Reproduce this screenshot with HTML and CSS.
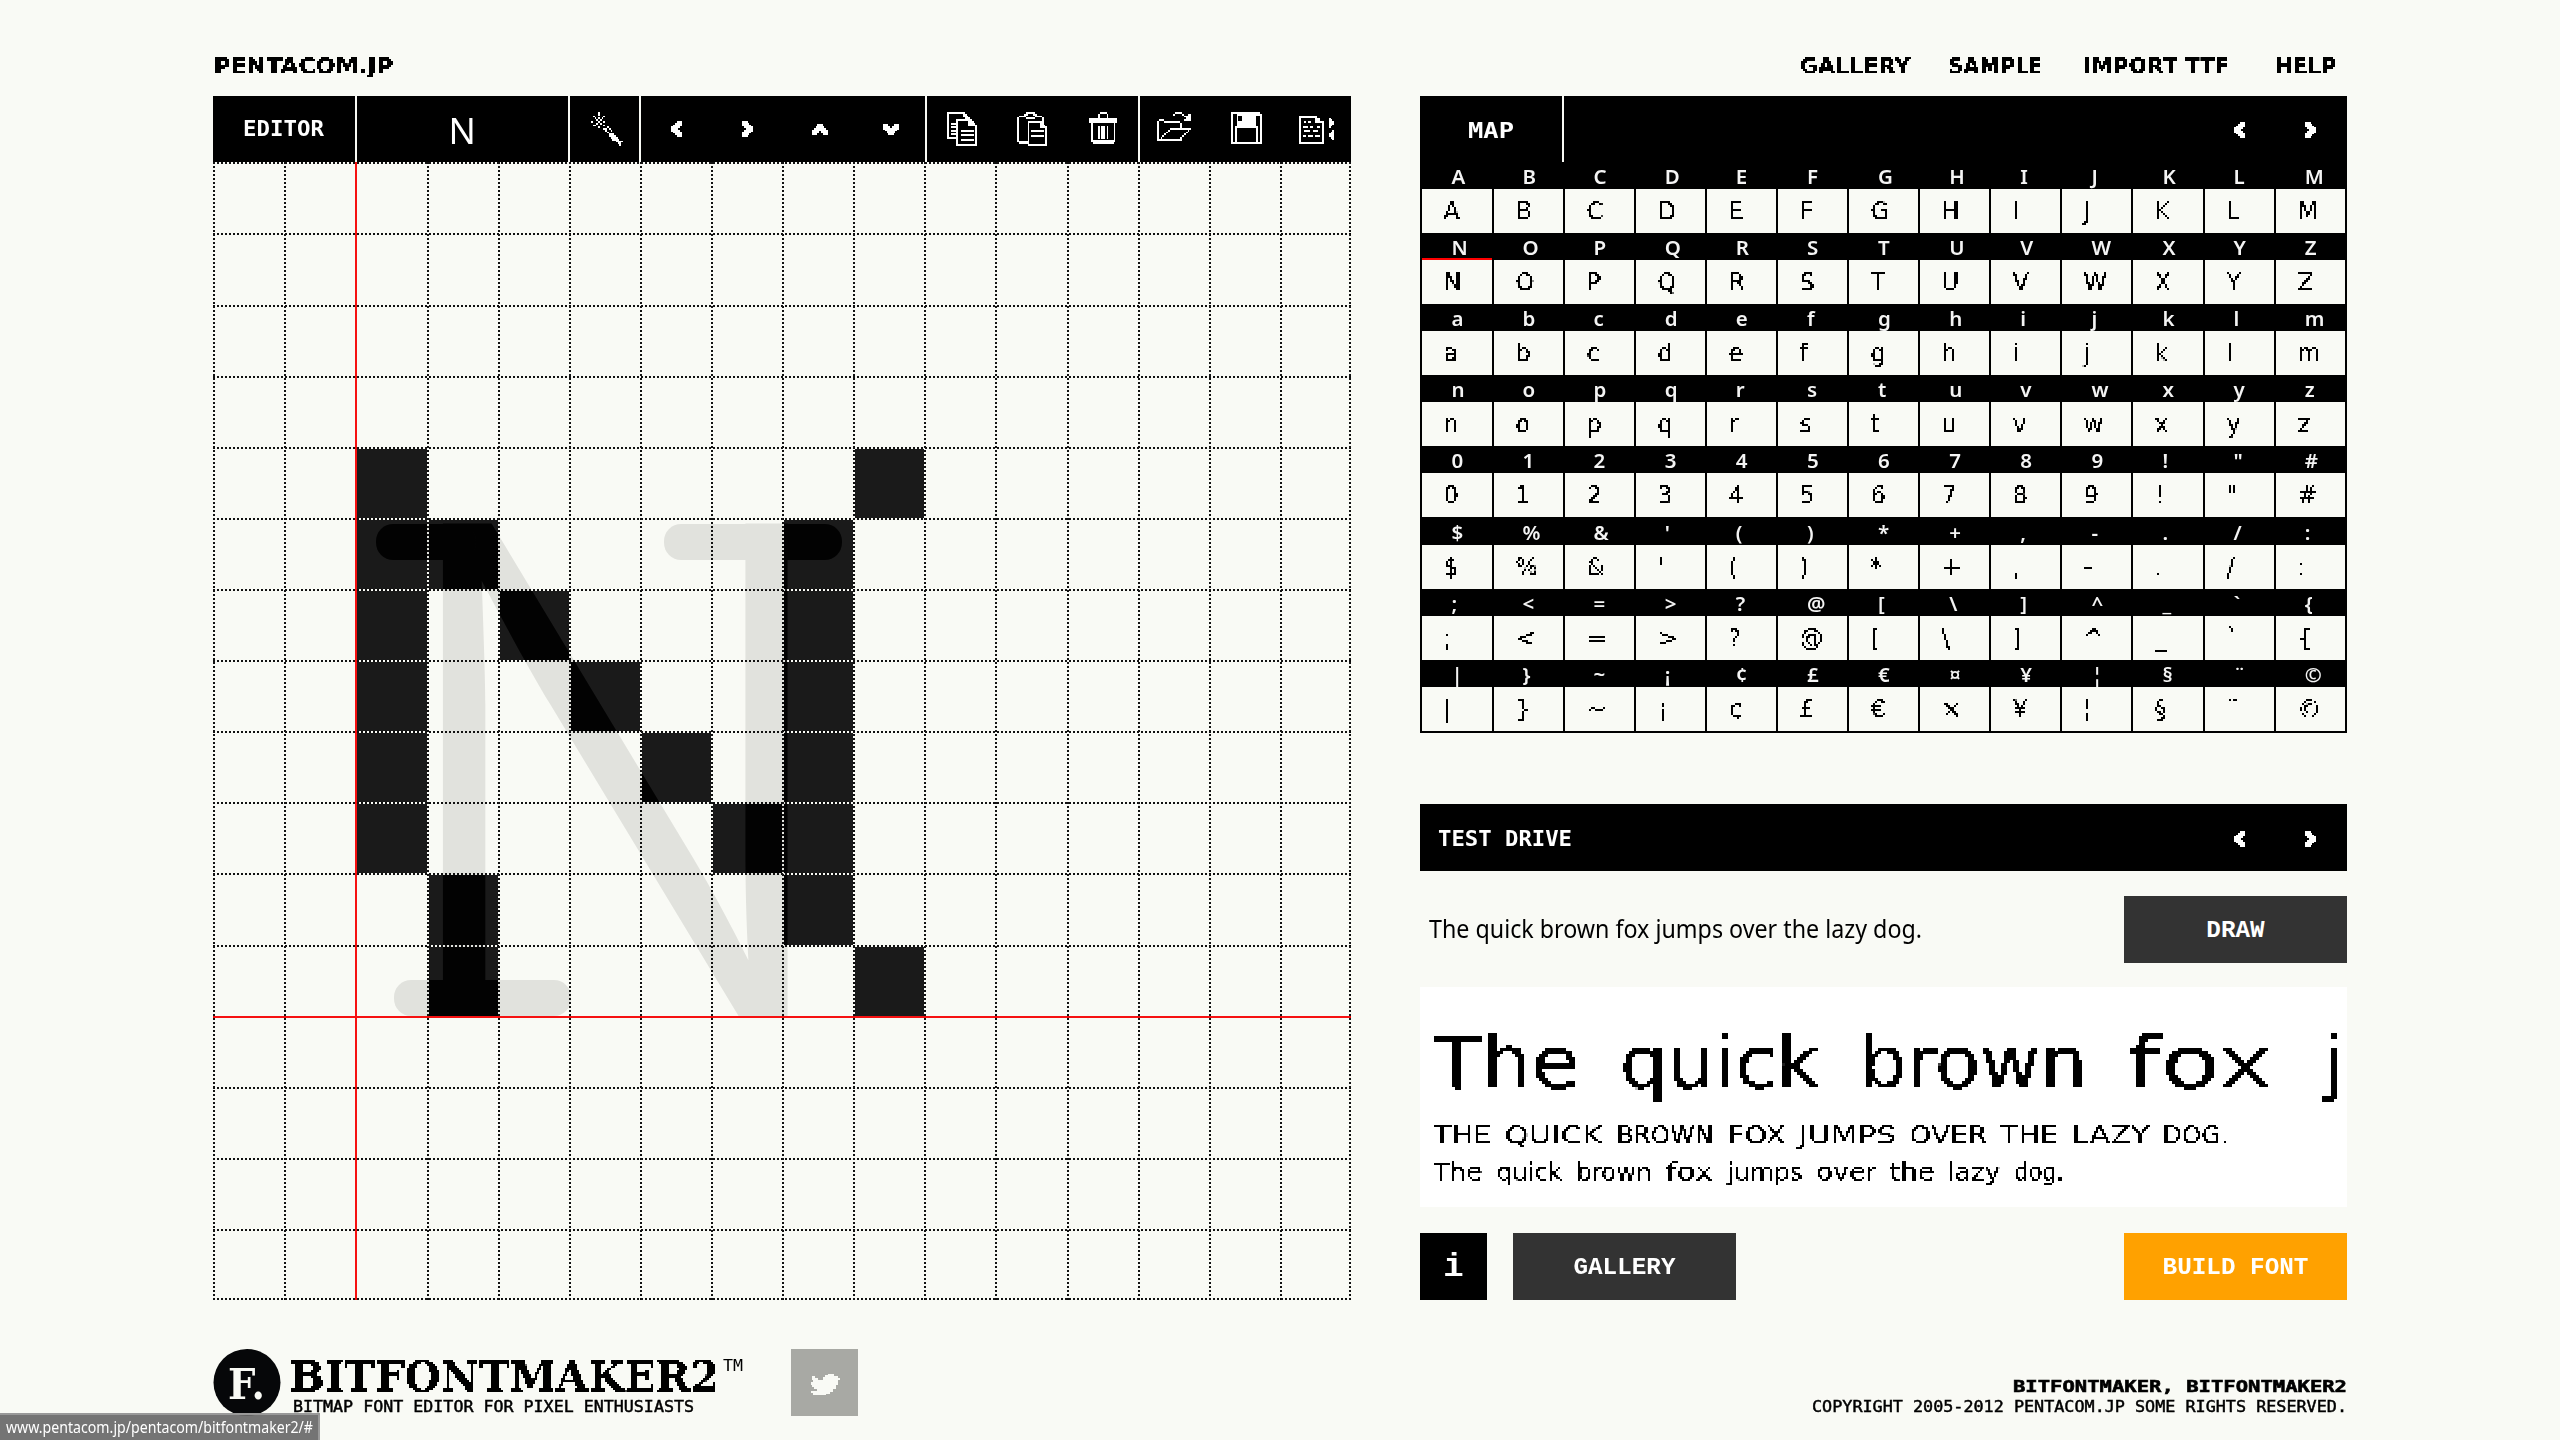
FILE: index.html
```html
<!DOCTYPE html>
<html lang="en">
<head>
<meta charset="utf-8">
<title>BitFontMaker2</title>
<link rel="stylesheet" href="styles.css">
</head>
<body>
<svg class="defs" width="0" height="0">
  <defs>
    <!-- snaps text to 2px blocks -->
    <filter id="px2" filterUnits="userSpaceOnUse" x="-4" y="-20" width="1000" height="260" color-interpolation-filters="sRGB">
      <feFlood x="-4" y="-20" width="1" height="1" flood-color="#000" result="seed"/>
      <feOffset in="seed" dx="0" dy="0" x="-4" y="-20" width="2" height="2"/>
      <feTile result="grid"/>
      <feComposite in="SourceGraphic" in2="grid" operator="in"/>
      <feComponentTransfer result="a"><feFuncA type="linear" slope="40" intercept="-17"/></feComponentTransfer>
      <feOffset in="a" dx="1" dy="0" result="b"/>
      <feOffset in="a" dx="0" dy="1" result="c"/>
      <feOffset in="a" dx="1" dy="1" result="d"/>
      <feMerge><feMergeNode in="a"/><feMergeNode in="b"/><feMergeNode in="c"/><feMergeNode in="d"/></feMerge>
    </filter>
    <!-- snaps text to 3px blocks -->
    <filter id="px3" filterUnits="userSpaceOnUse" x="-4" y="-20" width="1000" height="260" color-interpolation-filters="sRGB">
      <feFlood x="-3" y="-19" width="1" height="1" flood-color="#000" result="seed"/>
      <feOffset in="seed" dx="0" dy="0" x="-4" y="-20" width="3" height="3"/>
      <feTile result="grid"/>
      <feComposite in="SourceGraphic" in2="grid" operator="in"/>
      <feComponentTransfer><feFuncA type="linear" slope="40" intercept="-17"/></feComponentTransfer>
      <feMorphology operator="dilate" radius="1"/>
    </filter>
  </defs>
</svg>
<header class="top">
  <svg class="label wide" width="180" height="16"><text y="15.5" textLength="180" lengthAdjust="spacingAndGlyphs">PENTACOM.JP</text></svg>
  <nav class="nav">
    <svg class="label wide" width="111" height="16"><text y="15.5" textLength="111" lengthAdjust="spacingAndGlyphs">GALLERY</text></svg>
    <svg class="label wide" width="94" height="16"><text y="15.5" textLength="94" lengthAdjust="spacingAndGlyphs">SAMPLE</text></svg>
    <svg class="label wide" width="146" height="16"><text y="15.5" textLength="146" lengthAdjust="spacingAndGlyphs">IMPORT TTF</text></svg>
    <svg class="label wide" width="61" height="16"><text y="15.5" textLength="61" lengthAdjust="spacingAndGlyphs">HELP</text></svg>
  </nav>
</header>

<main class="main">
  <section class="editor">
    <div class="bar">
      <div class="tool title"><svg class="label mono" width="81" height="16"><text y="16" textLength="81" lengthAdjust="spacingAndGlyphs">EDITOR</text></svg></div>
      <div class="tool current">N</div>
      <div class="tool wand"><svg class="ico" width="32" height="34" viewBox="0 0 18 19"><path d="M4 0h1v2h-1zM1 2h1v1h-1zM7 2h1v1h-1zM2 3h1v1h-1zM6 3h1v1h-1zM4 3h1v1h-1zM3 4h1v1h-1zM5 4h1v1h-1zM0 5h1v1h-1zM7 5h1v1h-1zM4 5h1v1h-1zM3 6h1v1h-1zM5 6h1v1h-1zM1 7h2v1h-2zM7 7h1v1h-1zM4 8h1v1h-1zM7 9h2v1h-2zM9 8h1v1h-1zM8 10h1v1h-1zM10 9h1v1h-1zM9 11h1v1h-1zM11 10h1v1h-1zM10 12h3v1h-3zM10 13h4v1h-4zM11 14h4v1h-4zM12 15h4v1h-4zM14 16h4v1h-4zM15 17h2v2h-1v-1h-1z"/></svg></div>
      <div class="tool arrow"><svg class="ico" width="11" height="16" viewBox="0 0 6 9"><path d="M3 0h3v3h-1v1h-1v1h1v1h1v3h-3v-1h-1v-1h-1v-1h-1v-3h1v-1h1v-1h1z"/></svg></div>
      <div class="tool"><svg class="ico" width="11" height="16" viewBox="0 0 6 9"><path d="M3 0h-3v3h1v1h1v1h-1v1h-1v3h3v-1h1v-1h1v-1h1v-3h-1v-1h-1v-1h-1z"/></svg></div>
      <div class="tool shift"><svg class="ico" width="16" height="11" viewBox="0 0 9 6"><path d="M0 3v3h3v-1h1v-1h1v1h1v1h3v-3h-1v-1h-1v-1h-1v-1h-3v1h-1v1h-1v1z"/></svg></div>
      <div class="tool shift"><svg class="ico" width="16" height="11" viewBox="0 0 9 6"><path d="M0 3v-3h3v1h1v1h1v-1h1v-1h3v3h-1v1h-1v1h-1v1h-3v-1h-1v-1h-1v-1z"/></svg></div>
      <div class="tool ruled"><svg class="ico" width="32" height="34" viewBox="0 0 18 19"><path d="M0 0h10v1h1v1h1v1h1v1h1v1h1v1h1v1h1v12h-12v-4h-5zM1 1v13h4v-1h-3v-1h3v-1h-3v-1h3v-1h-3v-1h3v-1h-3v-1h3v-2h5v-1h-1v-2zM6 5v13h10v-10h-4v-3z" fill-rule="evenodd"/><path d="M8 10h7v1h-7zM8 12.500h7v1h-7zM8 15h7v1h-7z"/></svg></div>
      <div class="tool shift"><svg class="ico" width="32" height="34" viewBox="0 0 18 19"><path d="M5 0h5v1h-5zM4 1h2v1h-2zM9 1h2v1h-2zM1 2h4v1h-4zM10 2h4v1h-4zM5 3h5v1h-5zM0 3h1v14h-1zM14 3h1v3h-1zM1 16h5v2h-5z"/><path d="M6 5h8v1h1v1h1v1h1v11h-11zM7 6v12h9v-9h-3v-3z" fill-rule="evenodd"/><path d="M8 10h7v1h-7zM8 13h7v1h-7z"/></svg></div>
      <div class="tool shift"><svg class="ico" width="30" height="34" viewBox="0 0 17 19"><path d="M6 0h4v1h-4zM5 1h1v2h-1zM10 1h1v2h-1zM1 3h14v1h-14zM0 4h1v2h-1zM15 4h1v2h-1zM1 4h14v-1h1v3h-16v-3h1zM1 6h1v11h-1zM14 6h1v11h-1zM2 16h12v2h-12zM5 8h1v7h-1zM7 8h2v7h-2zM10 8h1v7h-1z"/></svg></div>
      <div class="tool ruled open"><svg class="ico" width="36" height="34" viewBox="0 0 20 19"><path d="M10 0h4v1h-4zM9 1h1v1h-1zM14 1h1v1h-1zM15 2h2v1h-2zM17 1h2v4h-4v-1h1v-1h1zM1 4h3v1h-3zM4 5h9v1h-9zM13 6h1v3h-1zM0 5h1v11h-1zM7 9h12v1h-12zM6 10h1v1h-1zM5 11h1v1h-1zM4 12h1v1h-1zM3 13h1v1h-1zM2 14h1v1h-1zM1 15h13v1h-13zM18 10h-1v1h1zM17 11h-1v1h1zM16 12h-1v1h1zM15 13h-1v1h1zM14 14h-1v1h1z"/></svg></div>
      <div class="tool shift"><svg class="ico" width="31" height="34" viewBox="0 0 17 19"><path d="M0 0h16v1h1v17h-17zM1 1v16h1v-9h1v-1h11v1h1v9h1v-15h-2v5h-11v-6zM4 2v3h2v-3zM3 9v8h11v-8z" fill-rule="evenodd"/></svg></div>
      <div class="tool shift"><svg class="ico" width="37" height="34" viewBox="0 0 21 19"><path d="M0 2h10v1h2v2h2v13h-14zM1 3v14h12v-11h-4v-3z" fill-rule="evenodd"/><path d="M3 5h1v1h-1zM5 5h2v1h-2zM2 8h3v1h-3zM6 8h2v1h-2zM10 8h2v1h-2zM3 10h3v1h-3zM8 10h3v1h-3zM2 13h2v1h-2zM5 13h3v1h-3zM9 13h3v1h-3zM17 3h1v1h1v1h1v2h-1v1h-1v1h-1zM20 10h-1v1h-1v1h-1v2h1v1h1v1h1z"/></svg></div>
    </div>
    <svg class="canvas" id="canvas" width="1138" height="1138"></svg>
  </section>

  <section class="side">
    <div class="bar map-bar">
      <div class="tool map-title"><svg class="label mono" width="46" height="16"><text y="16" textLength="46" lengthAdjust="spacingAndGlyphs">MAP</text></svg></div>
      <div class="pager">
        <svg class="ico" width="11" height="16" viewBox="0 0 6 9"><path d="M3 0h3v3h-1v1h-1v1h1v1h1v3h-3v-1h-1v-1h-1v-1h-1v-3h1v-1h1v-1h1z"/></svg>
        <svg class="ico" width="11" height="16" viewBox="0 0 6 9"><path d="M3 0h-3v3h1v1h1v1h-1v1h-1v3h3v-1h1v-1h1v-1h1v-3h-1v-1h-1v-1h-1z"/></svg>
      </div>
    </div>
    <div class="map" id="map"></div>

    <div class="bar drive-bar">
      <svg class="label mono" width="134" height="16"><text y="16" textLength="134" lengthAdjust="spacingAndGlyphs">TEST DRIVE</text></svg>
      <div class="pager">
        <svg class="ico" width="11" height="16" viewBox="0 0 6 9"><path d="M3 0h3v3h-1v1h-1v1h1v1h1v3h-3v-1h-1v-1h-1v-1h-1v-3h1v-1h1v-1h1z"/></svg>
        <svg class="ico" width="11" height="16" viewBox="0 0 6 9"><path d="M3 0h-3v3h1v1h1v1h-1v1h-1v3h3v-1h1v-1h1v-1h1v-3h-1v-1h-1v-1h-1z"/></svg>
      </div>
    </div>
    <div class="phrase">
      <svg class="phrase-text" width="493" height="30"><text y="24" textLength="493" lengthAdjust="spacingAndGlyphs">The quick brown fox jumps over the lazy dog.</text></svg>
      <div class="btn">DRAW</div>
    </div>
    <svg class="preview" id="preview" width="927" height="220"></svg>
    <div class="actions">
      <div class="btn info">i</div>
      <div class="btn">GALLERY</div>
      <div class="btn build">BUILD FONT</div>
    </div>
  </section>
</main>

<footer class="foot">
  <svg class="badge" width="68" height="68"><circle cx="34" cy="33.500" r="33.500"/><text x="15" y="49.500" textLength="37" lengthAdjust="spacingAndGlyphs">F.</text></svg>
  <div class="brand">
    <div class="brand-row">
      <svg class="brand-name" width="430" height="32"><text y="31" textLength="430" lengthAdjust="spacingAndGlyphs">BITFONTMAKER2</text></svg>
      <svg class="tm" width="20" height="12"><text y="11" textLength="20" lengthAdjust="spacingAndGlyphs">TM</text></svg>
    </div>
    <svg class="tag" width="401" height="12"><text y="12" textLength="401" lengthAdjust="spacingAndGlyphs">BITMAP FONT EDITOR FOR PIXEL ENTHUSIASTS</text></svg>
  </div>
  <div class="tweet"><svg width="30" height="21" viewBox="0 0 30 21" shape-rendering="crispEdges"><path d="M2 2h3v2h3v2h5V3h2V1h3V0h6v2h4v2h2v2h-2v5h-2v4h-3v3h-3v2h-4v1H3v-2H1v-2h6v-2H4v-2H2v-2H1V8h2V6H2z"/></svg></div>
  <div class="rights">
    <svg class="tag bold" width="334" height="12"><text y="12" textLength="334" lengthAdjust="spacingAndGlyphs">BITFONTMAKER, BITFONTMAKER2</text></svg>
    <svg class="tag" width="535" height="12"><text y="12" textLength="535" lengthAdjust="spacingAndGlyphs">COPYRIGHT 2005-2012 PENTACOM.JP SOME RIGHTS RESERVED.</text></svg>
  </div>
</footer>
<div class="status"><svg width="307" height="25"><text y="17.500" textLength="307" lengthAdjust="spacingAndGlyphs">www.pentacom.jp/pentacom/bitfontmaker2/#</text></svg></div>
<script src="app.js"></script>
</body>
</html>
```
FILE: styles.css
```css
* { box-sizing: border-box; }
body {
  position: relative;
  margin: 0;
  width: 2560px;
  height: 1440px;
  overflow: hidden;
  background: #f9faf5;
  color: #000;
  font-family: "Noto Sans", sans-serif;
}
svg { display: block; flex: none; overflow: visible; }
.defs { position: absolute; }
.ico { fill: #fff; shape-rendering: crispEdges; }

.label text { font-weight: 700; fill: currentColor; }
.wide text { font-family: "DejaVu Sans", sans-serif; font-size: 21px; filter: url(#px2); }
.mono text { font-family: "DejaVu Sans Mono", monospace; font-size: 22px; }

.top {
  height: 96px;
  padding: 57px 224px 0 213px;
  display: flex;
  justify-content: space-between;
}
.nav { display: flex; }
.nav svg:nth-child(2) { margin-left: 38px; }
.nav svg:nth-child(3) { margin-left: 41px; }
.nav svg:nth-child(4) { margin-left: 46px; }

.main {
  display: grid;
  grid-template-columns: 1138px 927px;
  gap: 69px;
  height: 1204px;
  padding-left: 213px;
}
.bar {
  display: flex;
  align-items: center;
  height: 66px;
  background: #000;
  color: #fff;
}
.tool {
  display: flex;
  align-items: center;
  justify-content: center;
  width: 71.100px;
  height: 66px;
  padding-left: 1px;
}
.title { width: 142px; padding: 0 0 2px 0; }
.current {
  width: 215px;
  border-left: 2px solid #f9faf5;
  border-right: 2px solid #f9faf5;
  font-size: 36px;
  line-height: 1;
  padding: 4px 0 0 0;
}
.wand { width: 71px; border-right: 2px solid #f9faf5; padding: 0 0 0 5px; }
.arrow { padding: 0 0 0 1px; }
.shift { padding-left: 4px; }
.ruled { border-left: 2px solid #f9faf5; padding: 0 0 0 4px; }
.open { padding: 0 0 0 1px; }
.canvas { background: #f9faf5; }
.cell { fill: #1a1a1a; }
.dots { stroke: #111; stroke-width: 2; stroke-dasharray: 2 2; }
.guide { fill: #f61111; }
.ghost { mix-blend-mode: difference; fill: #181818; }
.ghost text { font-family: "Inter", sans-serif; font-size: 100px; font-weight: 300; }

.side { display: flex; flex-direction: column; }
.map-bar, .drive-bar { justify-content: space-between; }
.map-title { width: 144px; border-right: 2px solid #f9faf5; padding: 2px 0 0 0; }
.pager { display: flex; gap: 60px; padding-right: 31px; }
.pager svg { margin-top: 2px; }
.map {
  display: grid;
  grid-template-columns: repeat(13, 71.110px);
  grid-auto-rows: 71.110px;
  width: 927px;
  height: 571px;
  padding-left: 0.400px;
  background: #000;
}
.slot { display: grid; grid-template-rows: 27px 44px; padding-left: 2px; }
.code {
  overflow: hidden;
  padding-left: 29px;
  color: #f4f4f4;
  font-size: 20.500px;
  font-weight: 600;
  line-height: 29px;
}
.slot.on .code { border-bottom: 2px solid #f00; }
.glyph { background: #f9faf5; }
.glyph text { font-family: "DejaVu Sans", sans-serif; font-size: 24px; filter: url(#px2); }

.drive-bar { height: 67px; margin-top: 71px; padding: 0 0 0 18px; }
.drive-bar .pager svg { margin-top: 2px; }
.phrase {
  display: flex;
  justify-content: space-between;
  height: 66px;
  margin-top: 25px;
  padding-left: 9px;
}
.phrase-text { margin-top: 18px; }
.phrase-text text { font-size: 26px; }
.btn {
  width: 223px;
  height: 67px;
  background: #333;
  color: #fff;
  font: 700 24.300px/69px "Liberation Mono", monospace;
  text-align: center;
}
.preview { margin-top: 25px; background: #fff; overflow: hidden; }
.preview text { font-family: "DejaVu Sans", sans-serif; }
.preview .small { font-size: 24px; filter: url(#px2); }
.preview .large { font-size: 73px; filter: url(#px3); }
.actions { display: flex; margin-top: 26px; gap: 26px; }
.info { width: 67px; background: #000; font-size: 34px; }
.build { margin-left: auto; background: #ffa100; }

.foot { display: flex; height: 140px; padding: 49px 213px 0 213px; }
.badge circle { fill: #060709; }
.badge text { fill: #f9faf5; font: 700 43px "DejaVu Serif", serif; }
.brand { margin: 11px 0 0 8px; }
.brand-row { display: flex; gap: 4px; }
.brand-name text { font: 700 42.500px "DejaVu Serif Condensed", "DejaVu Serif", serif; font-stretch: semi-condensed; filter: url(#px2); }
.tm text { font: 400 15px "DejaVu Sans Mono", monospace; }
.tag text { font: 400 16.500px "DejaVu Sans Mono", monospace; stroke: #000; stroke-width: 0.500px; }
.bold text { font-weight: 700; stroke-width: 0.600px; }
.brand .tag { margin: 8px 0 0 4px; }
.tweet {
  display: flex;
  align-items: center;
  justify-content: center;
  width: 67px;
  height: 67px;
  margin-left: 48px;
  padding-top: 3px;
  background: #a8a9a4;
  fill: #f9faf5;
}
.rights {
  display: flex;
  flex-direction: column;
  align-items: flex-end;
  gap: 8px;
  margin: 31px 0 0 auto;
}
.status {
  position: absolute;
  left: 0;
  bottom: 0;
  width: 320px;
  height: 27px;
  padding-left: 6px;
  background: rgba(104, 104, 104, 0.92);
  border: solid #999;
  border-width: 2px 2px 0 0;
  fill: #fff;
  font-size: 16px;
}
```
FILE: app.js
```js
const NS = 'http://www.w3.org/2000/svg';
function add(parent, tag, attrs, text) {
  const el = document.createElementNS(NS, tag);
  for (const k in attrs) el.setAttribute(k, attrs[k]);
  if (text) el.textContent = text;
  parent.appendChild(el);
  return el;
}

// Editor grid: 16 x 16 cells
const canvas = document.getElementById('canvas');
const xs = [], ys = [];
for (let k = 0; k <= 16; k++) {
  xs.push(Math.min(1136, Math.round(213.2 + 71.11 * k) - 213));
  ys.push(Math.min(1136, Math.round(162.3 + 71.11 * k) - 162));
}
const filled = { 4: [2, 9], 5: [2, 3, 8], 6: [2, 4, 8], 7: [2, 5, 8], 8: [2, 6, 8], 9: [2, 7, 8], 10: [3, 8], 11: [3, 9] };
for (const r in filled) {
  for (const c of filled[r]) {
    const y = ys[r] + 2;
    add(canvas, 'rect', { class: 'cell', x: xs[c] + 2, y: y, width: xs[c + 1] - xs[c] - 2, height: ys[+r + 1] - y });
  }
}
const ghost = add(canvas, 'g', { class: 'ghost' });
add(ghost, 'text', { transform: 'translate(171.4 854) scale(6.08 6.77)' }, 'N');
add(ghost, 'rect', { x: 163, y: 362, width: 100, height: 36, rx: 17 });
add(ghost, 'rect', { x: 200, y: 362, width: 60, height: 36 });
add(ghost, 'rect', { x: 451, y: 362, width: 178, height: 36, rx: 17 });
add(ghost, 'rect', { x: 181, y: 818, width: 177, height: 36, rx: 17 });
const dot = { class: 'dots', 'shape-rendering': 'crispEdges' };
for (const y of ys) add(canvas, 'line', { ...dot, x1: 0, x2: 1138, y1: y + 1, y2: y + 1 });
for (const x of xs) add(canvas, 'line', { ...dot, x1: x + 1, x2: x + 1, y1: 0, y2: 1138 });
add(canvas, 'rect', { class: 'guide', x: xs[2], y: 0, width: 2, height: 1138 });
add(canvas, 'rect', { class: 'guide', x: 0, y: ys[12], width: 1138, height: 2 });

// Character map
const codes = 'ABCDEFGHIJKLMNOPQRSTUVWXYZabcdefghijklmnopqrstuvwxyz0123456789!"#$%&\'()*+,-./:;<=>?@[\\]^_`{|}~¡¢£€¤¥¦§¨©';
const map = document.getElementById('map');
for (const ch of codes) {
  const slot = document.createElement('div');
  slot.className = ch === 'N' ? 'slot on' : 'slot';
  const code = document.createElement('div');
  code.className = 'code';
  code.textContent = ch;
  const glyph = document.createElement('div');
  glyph.className = 'glyph';
  const svg = add(glyph, 'svg', { width: 68, height: 44 });
  add(svg, 'text', { x: 21, y: 30 }, ch === '¤' ? '×' : ch);
  slot.append(code, glyph);
  map.append(slot);
}

// Preview lines: [word, left, right]
const lines = [
  { cls: 'large', y: 100.5, words: [['The', 13, 160], ['quick', 200, 400], ['brown', 440, 667], ['fox', 707, 854], ['j', 904, 924]] },
  { cls: 'small', y: 155.7, words: [['THE', 13, 71], ['QUICK', 84, 182], ['BROWN', 196, 293], ['FOX', 307, 365], ['JUMPS', 378, 476], ['OVER', 489, 567], ['THE', 580, 638], ['LAZY', 651, 729], ['DOG.', 742, 808]] },
  { cls: 'small', y: 193, words: [['The', 13, 62], ['quick', 76, 142], ['brown', 156, 231], ['fox', 245, 293], ['jumps', 307, 382], ['over', 396, 456], ['the', 469, 514], ['lazy', 527, 580], ['dog.', 594, 643]] }
];
const preview = document.getElementById('preview');
for (const l of lines) {
  for (const [word, a, b] of l.words) {
    add(preview, 'text', { class: l.cls, x: a, y: l.y, textLength: b - a, lengthAdjust: 'spacingAndGlyphs' }, word);
  }
}
```
